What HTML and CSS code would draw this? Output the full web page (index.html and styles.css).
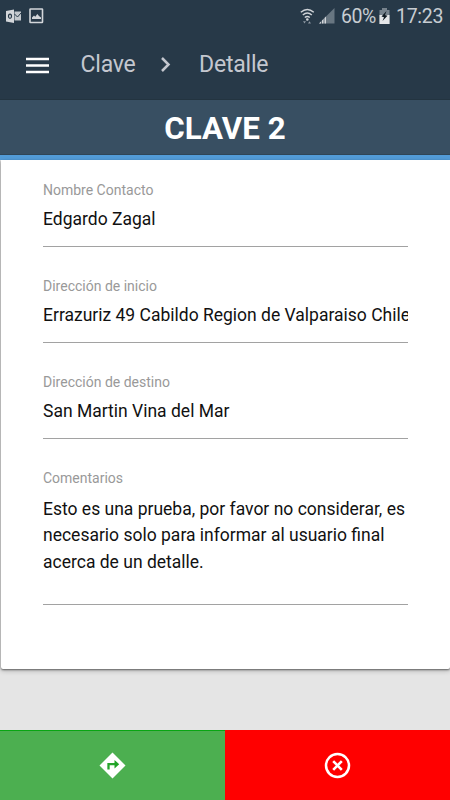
FILE: index.html
```html
<!DOCTYPE html>
<html lang="es">
<head>
<meta charset="utf-8">
<title>Clave - Detalle</title>
<link rel="stylesheet" href="styles.css">
</head>
<body>
<div class="screen">
  <header class="top">
    <div class="status">
      <svg class="mail" width="16" height="15" viewBox="0 0 16 15"><path d="M0 2 8 .5v13.5L0 12.5z" fill="#d3d6da"/><path d="M8.500 2.500H15v9H8.500z" fill="#c3c8cd"/><path d="m8.500 5 3 3L15 4" fill="none" stroke="#273948" stroke-width="1"/><ellipse cx="4" cy="7.200" rx="1.500" ry="2.100" fill="none" stroke="#273948" stroke-width="1.200"/></svg>
      <svg class="photo" width="15" height="16" viewBox="0 0 15 16"><rect x="1" y="1" width="12.500" height="13.500" rx=".5" fill="none" stroke="#d3d6da" stroke-width="1.600"/><path d="M3 11V9.500l2-2 1.300 1.200L8.300 6l1.700 2 2 1.500V11z" fill="#d3d6da"/></svg>
      <span class="spacer"></span>
      <svg class="wifi" width="15" height="17" viewBox="0 0 15 17"><g fill="none" stroke="#cfd3d7" stroke-width="1.400"><path d="M.8 4.300Q7.300-1.300 13.800 4.300"/><path d="M2.800 7q4.500-4 9 0"/><path d="M4.800 9.500q2.500-2.200 5 0"/></g><circle cx="7.300" cy="11.500" r="1.300" fill="#cfd3d7"/><path d="M3 13.200h3l-1.500 2.300zM8 15.500l1.500-2.300 1.500 2.300z" fill="#8d98a2"/></svg>
      <svg class="signal" width="16" height="16" viewBox="0 0 16 16"><path d="M15.500 0v15.500H0z" fill="#687681"/><path d="M7 8.500v7H0z" fill="#d3d6da"/><path d="M2.500 12v4M5 10v6" stroke="#273948" stroke-width=".7"/></svg>
      <span class="pct">60%</span>
      <svg class="battery" width="11" height="16" viewBox="0 0 11 16"><path d="M3 0h5v2h2.500v14H.5V2H3z" fill="#77838d"/><path d="M.5 7h10v9H.5z" fill="#e4e6e8"/><path d="M7.500 3 2.500 8.500l2.500.7L3.500 13l5-5.200-2.500-.8z" fill="#111b23"/></svg>
      <span class="clock">17:23</span>
    </div>
    <nav class="bar">
      <svg class="menu" width="24" height="17" viewBox="0 0 24 17"><path d="M0 2h23M0 8.500h23M0 15h23" stroke="#fff" stroke-width="2.600"/></svg>
      <span class="crumb first">Clave</span>
      <svg class="chevron" width="12" height="17" viewBox="0 0 12 17"><path d="m2 2 6.500 6.500L2 15" fill="none" stroke="#c4c7cf" stroke-width="2.500"/></svg>
      <span class="crumb second">Detalle</span>
    </nav>
  </header>
  <h1 class="title"><span>CLAVE 2</span></h1>
  <main class="content">
    <section class="card">
      <div class="field"><div class="label">Nombre Contacto</div><div class="value">Edgardo Zagal</div></div>
      <div class="field"><div class="label">Dirección de inicio</div><div class="value">Errazuriz 49 Cabildo Region de Valparaiso Chile</div></div>
      <div class="field"><div class="label">Dirección de destino</div><div class="value">San Martin Vina del Mar</div></div>
      <div class="field area"><div class="label">Comentarios</div><div class="value">Esto es una prueba, por favor no considerar, es<br>necesario solo para informar al usuario final<br>acerca de un detalle.</div></div>
    </section>
  </main>
  <footer class="actions">
    <div class="go"><svg width="27" height="27" viewBox="0 0 27 27"><path d="M13.500.5 26.500 13.500l-13 13L.5 13.500z" fill="#fff"/><path d="M9.500 17.500v-5.300h8" fill="none" stroke="#27a52c" stroke-width="2.300"/><path d="m15.500 8 4.700 4.200-4.700 4.200z" fill="#1fa326"/></svg></div>
    <div class="cancel"><svg width="27" height="27" viewBox="0 0 27 27"><circle cx="13.500" cy="13.500" r="11.500" fill="none" stroke="#fff" stroke-width="2.500"/><path d="m9.200 9.200 8.600 8.600m0-8.600-8.600 8.600" stroke="#fff" stroke-width="2.600"/></svg></div>
  </footer>
</div>
</body>
</html>
```
FILE: styles.css
```css
* { box-sizing: border-box; }
body { margin: 0; font-family: Roboto, "Liberation Sans", sans-serif; }
svg { display: block; flex: none; }
.screen { width: 450px; height: 800px; display: flex; flex-direction: column; overflow: hidden; background: #e5e5e5; }
.top { height: 100px; flex: none; background: #273948; border-bottom: 1px solid #233440; }
.status { height: 32px; display: flex; align-items: center; padding: 0 7px 0 6px; color: #c8cdd2; font-size: 19.500px; white-space: nowrap; }
.photo { margin-left: 7px; }
.spacer { flex: 1; }
.signal { margin-left: 4px; }
.pct { width: 35px; margin-left: 6px; letter-spacing: -.4px; }
.battery { margin-left: 3px; }
.clock { width: 47px; margin-left: 6px; letter-spacing: -.3px; }
.bar { height: 64px; display: flex; align-items: center; padding-left: 26px; color: #c4c7cf; font-size: 23px; letter-spacing: -.2px; }
.menu { position: relative; top: 1px; }
.first { width: 56px; margin-left: 30.500px; }
.chevron { margin-left: 23.500px; }
.second { margin-left: 27px; }
.title { height: 60px; flex: none; margin: 0; padding-top: 1px; background: #384f62; border-bottom: 5px solid #529bd7; box-shadow: inset 0 -1px #2f4556; display: flex; align-items: center; justify-content: center; color: #fff; font-size: 31.300px; font-weight: 700; }
.content { flex: 1; }
.card { height: 508.500px; margin-left: 1px; padding: 19.500px 42px 0; background: #fff; border-radius: 0 0 2px 2px; box-shadow: 0 1px 2px rgba(0,0,0,.5), 0 2px 5px rgba(0,0,0,.2); }
.field { height: 67.500px; margin-bottom: 28.700px; border-bottom: 1px solid #a2a2a2; }
.label { height: 20px; line-height: 20px; font-size: 14px; color: #999; }
.value { margin-top: 9.500px; height: 20px; line-height: 20px; font-size: 17.500px; color: #111; white-space: nowrap; overflow: hidden; }
.area { height: 136.500px; }
.area .value { margin-top: 8px; height: 80px; line-height: 26.300px; }
.actions { height: 70px; flex: none; display: flex; }
.go, .cancel { flex: 1; display: flex; justify-content: center; align-items: center; }
.go { background: #4caf50; border-top: 1px solid #08a512; }
.cancel { background: #f00; }
```
